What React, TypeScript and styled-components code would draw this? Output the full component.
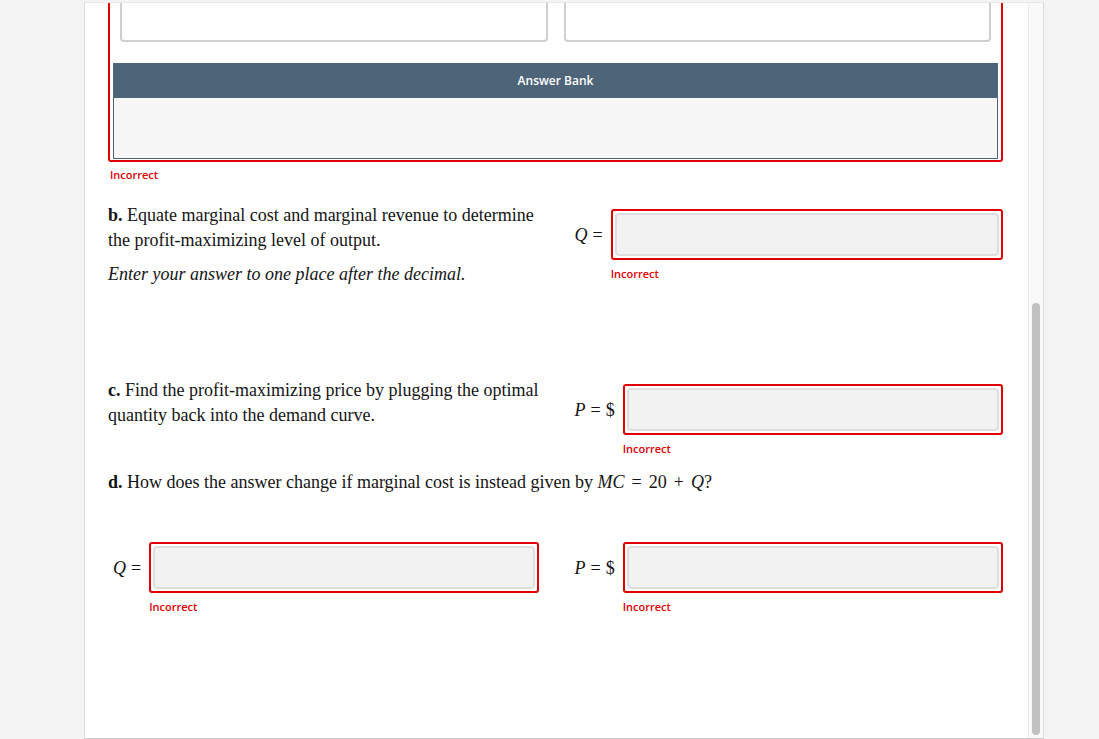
import React from "react";
import styled, { createGlobalStyle } from "styled-components";

const Global = createGlobalStyle`
  html, body { margin: 0; padding: 0; background: #f3f3f3; }
  body { font-family: "Liberation Serif", "Times New Roman", serif; color: #141414; }
  * { box-sizing: border-box; }
`;

const Page = styled.div`
  width: 1099px;
  height: 739px;
  overflow: hidden;
  padding-top: 2px;
`;

const Panel = styled.div`
  margin-left: 84px;
  width: 960px;
  height: 737px;
  background: #fff;
  border: 1px solid #dcdcdc;
  border-top-color: #e8e8e8;
  border-bottom-color: #c9c9c9;
  display: flex;
`;

const Content = styled.div`
  flex: 1;
  overflow: hidden;
  padding: 0 25px 0 23px;
`;

const Scrolled = styled.div`
  margin-top: -36px;
`;

const Track = styled.div`
  width: 15px;
  background: #f9f9f9;
  border-left: 1px solid #ececec;
  display: flex;
  flex-direction: column;
  align-items: center;
  padding-top: 300px;
  padding-bottom: 3px;
`;

const Thumb = styled.div`
  width: 8px;
  flex: 1;
  border-radius: 4px;
  background: #c1c1c1;
`;

const RedFrame = styled.div`
  border: 2px solid #e00000;
  border-radius: 3px;
  padding: 0 3px 1px;
`;

const DropRow = styled.div`
  display: grid;
  grid-template-columns: 1fr 1fr;
  column-gap: 16px;
  padding: 0 7px;
`;

const DropBox = styled.div`
  height: 73px;
  border: 2px solid #cfcfcf;
  border-radius: 4px;
  background: #fff;
`;

const Bank = styled.div`
  margin-top: 21px;
`;

const BankHeader = styled.div`
  height: 35px;
  background: #4e6479;
  color: #fff;
  font-family: "Open Sans", "Liberation Sans", sans-serif;
  font-weight: 600;
  font-size: 12px;
  display: flex;
  align-items: center;
  justify-content: center;
`;

const BankBody = styled.div`
  height: 61px;
  background: #f7f7f7;
  border: 1px solid #4e6479;
  border-top: none;
`;

const Feedback = styled.div<{ $indent?: number; $top?: number }>`
  font-family: "Open Sans", "Liberation Sans", sans-serif;
  font-weight: 600;
  font-size: 11px;
  line-height: 14px;
  color: #e00000;
  margin-top: ${(p) => p.$top ?? 7}px;
  padding-left: ${(p) => p.$indent ?? 0}px;
`;

const Part = styled.div<{ $top: number }>`
  display: grid;
  grid-template-columns: 1fr 1fr;
  column-gap: 34px;
  align-items: start;
  margin-top: ${(p) => p.$top}px;
`;

const Prompt = styled.p<{ $italic?: boolean; $top?: number }>`
  margin: ${(p) => p.$top ?? 0}px 0 0;
  font-size: 18px;
  line-height: 25px;
  white-space: nowrap;
  font-style: ${(p) => (p.$italic ? "italic" : "normal")};
`;

const Letter = styled.b`
  font-weight: 700;
`;

const FullLine = styled.p<{ $top: number }>`
  margin: ${(p) => p.$top}px 0 0;
  font-size: 18px;
  line-height: 25px;
  white-space: nowrap;
`;

const Field = styled.div<{ $top?: number; $pad?: number }>`
  display: grid;
  grid-template-columns: auto 1fr;
  column-gap: 8px;
  margin-top: ${(p) => p.$top ?? 0}px;
  padding-left: ${(p) => p.$pad ?? 0}px;
`;

const Label = styled.div`
  align-self: center;
  font-size: 18px;
  white-space: nowrap;
  padding-top: 1px;
`;

const Var = styled.i`
  font-style: italic;
`;

const Op = styled.span<{ $last?: boolean; $wide?: boolean }>`
  margin: 0 ${(p) => (p.$last ? 0 : p.$wide ? 7 : 5)}px 0 ${(p) => (p.$wide ? 7 : 5)}px;
`;

const AnswerBox = styled.div`
  height: 51px;
  border: 2px solid #e00000;
  border-radius: 3px;
  padding: 2px;
`;

const Input = styled.div`
  height: 100%;
  background: #f2f2f2;
  border: 2px solid #dedede;
  border-radius: 4px;
`;

const FeedbackCell = styled.div`
  grid-column: 2;
`;

function AnswerField({
  label,
  top,
  pad,
}: {
  label: React.ReactNode;
  top?: number;
  pad?: number;
}) {
  return (
    <Field $top={top} $pad={pad}>
      <Label>{label}</Label>
      <AnswerBox>
        <Input />
      </AnswerBox>
      <FeedbackCell>
        <Feedback>Incorrect</Feedback>
      </FeedbackCell>
    </Field>
  );
}

const QLabel = (
  <>
    <Var>Q</Var>
    <Op $last>=</Op>
  </>
);

const PLabel = (
  <>
    <Var>P</Var>
    <Op>=</Op>$
  </>
);

export default function App() {
  return (
    <>
      <Global />
      <Page>
        <Panel>
          <Content>
            <Scrolled>
              <RedFrame>
                <DropRow>
                  <DropBox />
                  <DropBox />
                </DropRow>
                <Bank>
                  <BankHeader>Answer Bank</BankHeader>
                  <BankBody />
                </Bank>
              </RedFrame>
              <Feedback $indent={2} $top={6}>
                Incorrect
              </Feedback>

              <Part $top={21}>
                <div>
                  <Prompt>
                    <Letter>b.</Letter> Equate marginal cost and marginal revenue to determine
                    <br />
                    the profit-maximizing level of output.
                  </Prompt>
                  <Prompt $italic $top={9}>
                    Enter your answer to one place after the decimal.
                  </Prompt>
                </div>
                <AnswerField label={QLabel} top={6} pad={2} />
              </Part>

              <Part $top={91}>
                <div>
                  <Prompt>
                    <Letter>c.</Letter> Find the profit-maximizing price by plugging the optimal
                    <br />
                    quantity back into the demand curve.
                  </Prompt>
                </div>
                <AnswerField label={PLabel} top={6} pad={2} />
              </Part>

              <FullLine $top={14}>
                <Letter>d.</Letter> How does the answer change if marginal cost is instead given by{" "}
                <Var>MC</Var>
                <Op $wide>=</Op>20<Op $wide>+</Op>
                <Var>Q</Var>?
              </FullLine>

              <Part $top={47}>
                <AnswerField label={QLabel} pad={5} />
                <AnswerField label={PLabel} pad={2} />
              </Part>
            </Scrolled>
          </Content>
          <Track>
            <Thumb />
          </Track>
        </Panel>
      </Page>
    </>
  );
}
